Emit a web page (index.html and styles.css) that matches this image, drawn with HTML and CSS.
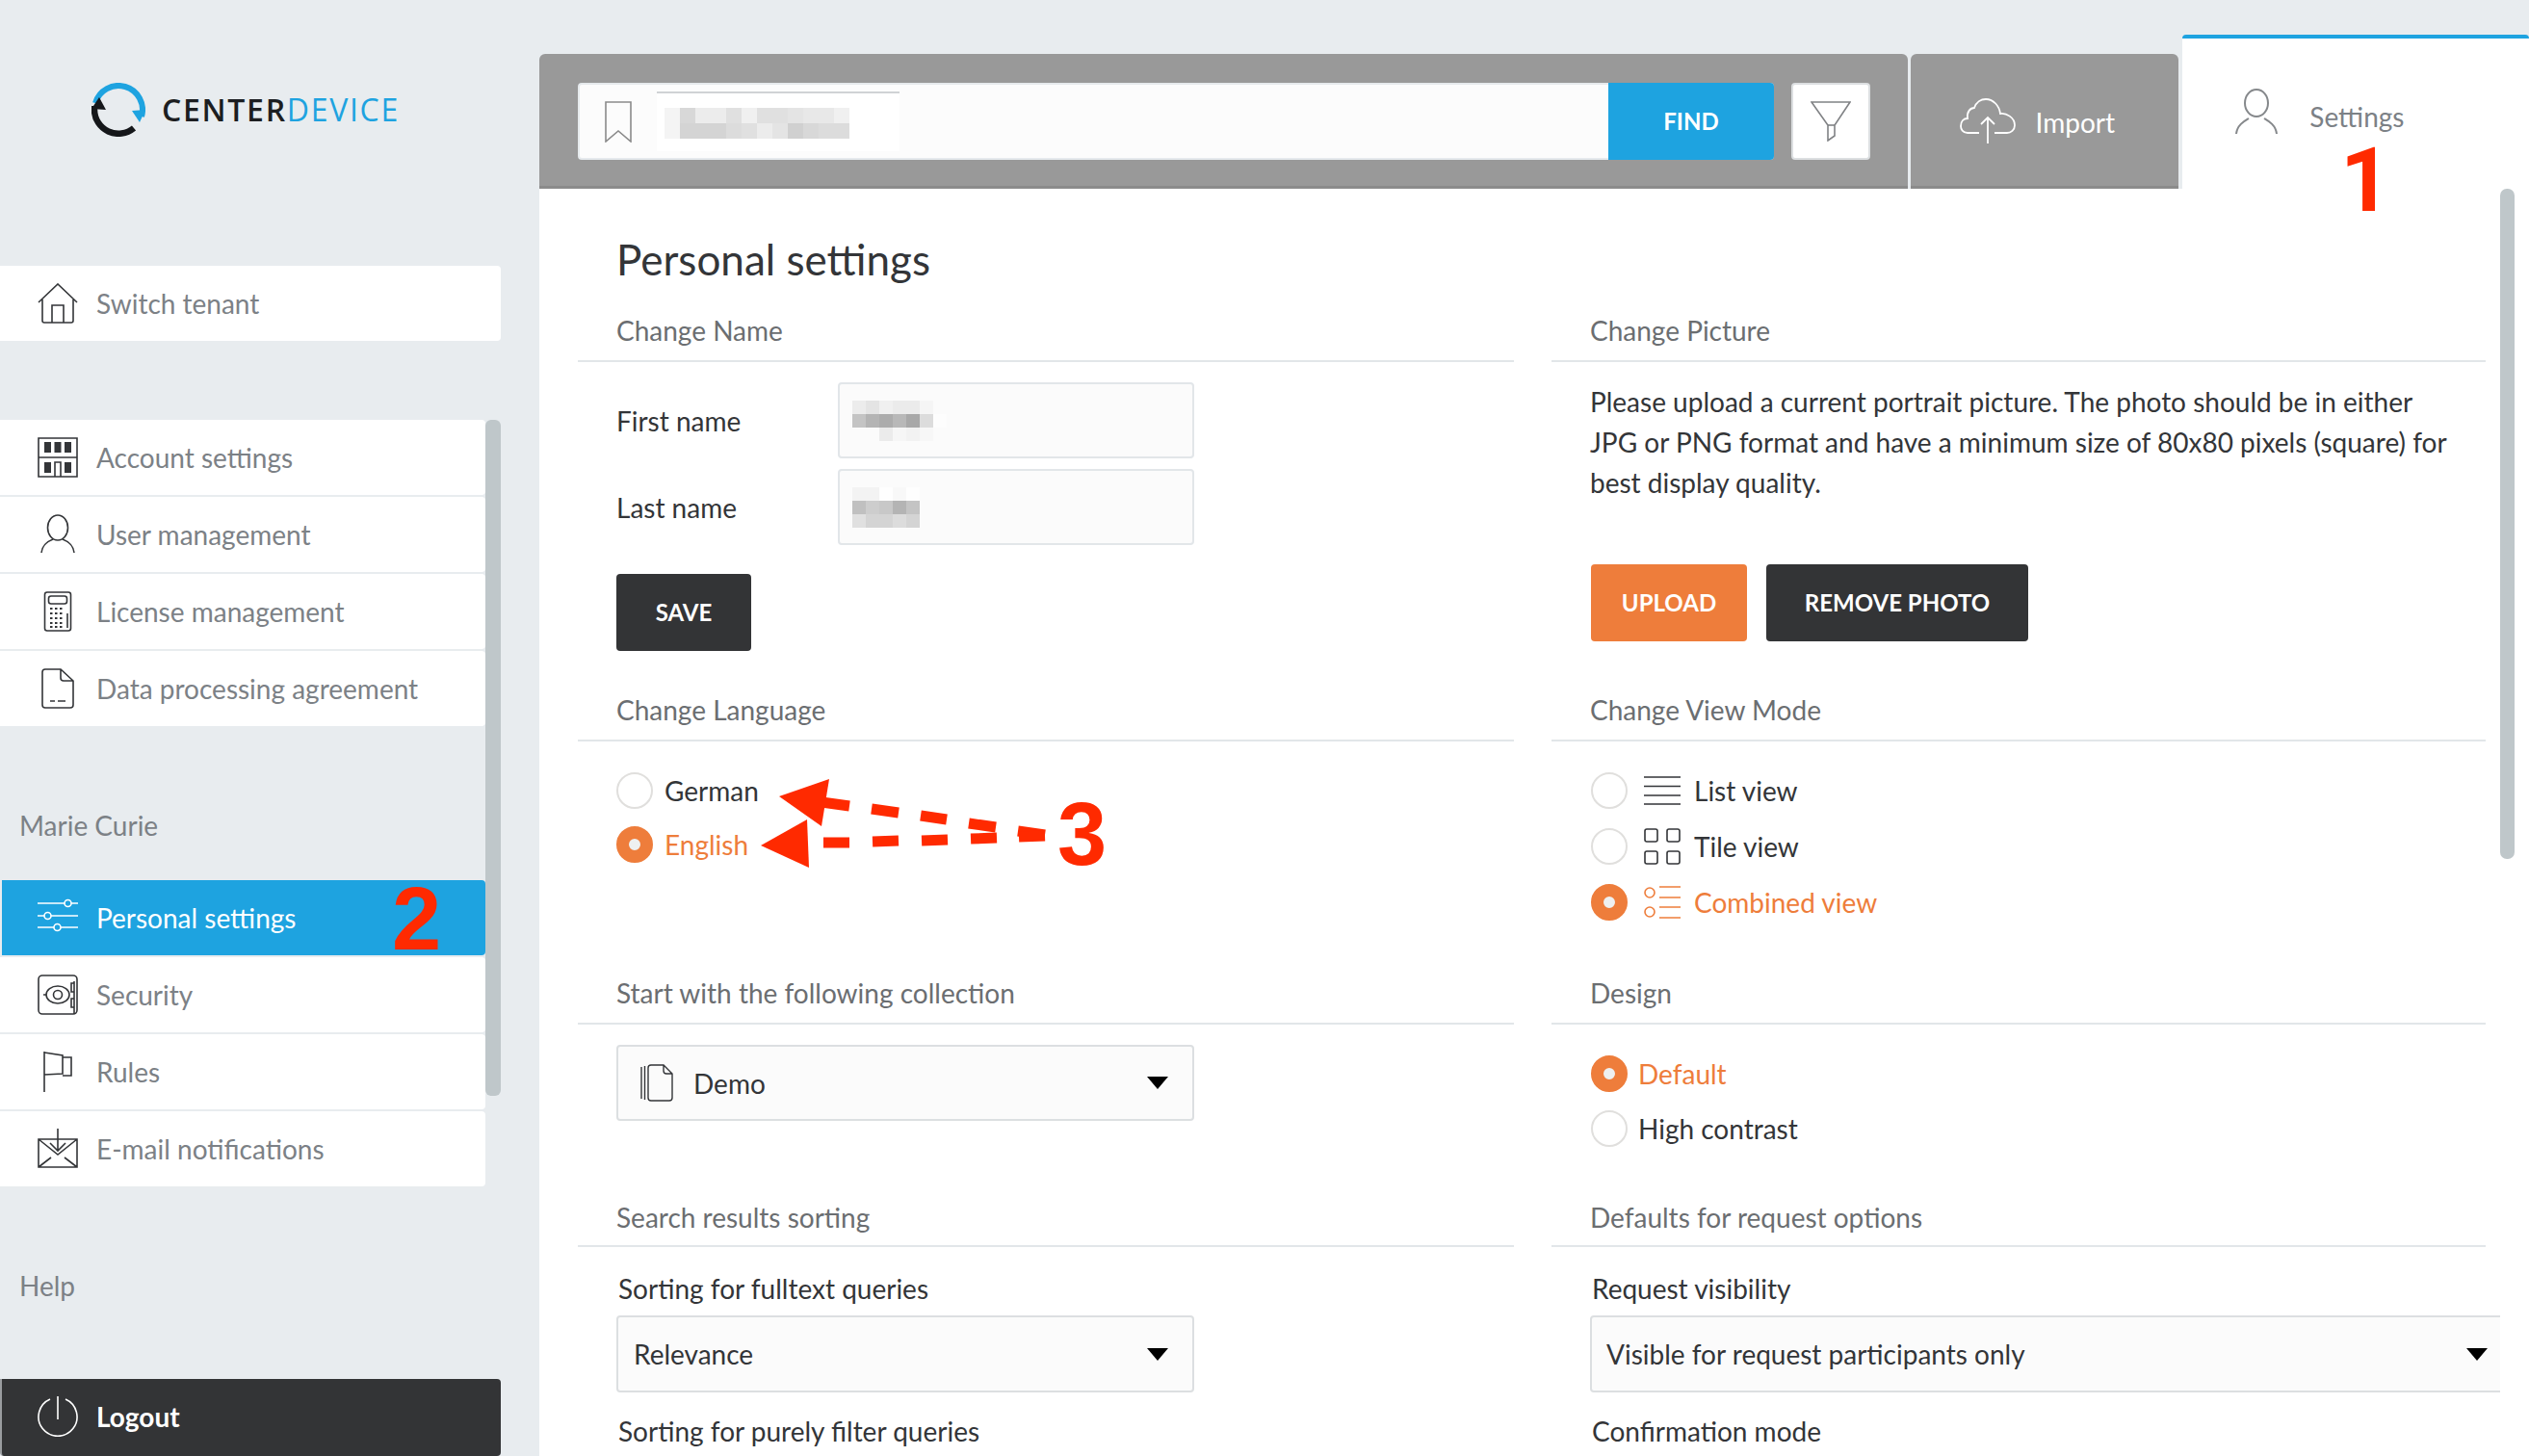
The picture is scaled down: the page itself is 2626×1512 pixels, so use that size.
FILE: index.html
```html
<!DOCTYPE html>
<html lang="en">
<head>
<meta charset="utf-8">
<title>CenterDevice - Personal settings</title>
<link rel="stylesheet" href="styles.css">
</head>
<body>
<div class="app">
  <aside class="sidebar">
    <div class="logo">
      <svg class="logo-mark" viewBox="0 0 56 56" width="56" height="56">
        <path d="M4 21A25 25 0 0 1 52 35" fill="none" stroke="#1ea3e0" stroke-width="6"/>
        <path d="M42 29L50 41L56 28Z" fill="#1ea3e0"/>
        <path d="M44 47A25 25 0 0 1 3 28V24" fill="none" stroke="#15171a" stroke-width="6.500"/>
        <path d="M0 27L8 15L15 28Z" fill="#15171a"/>
      </svg>
      <span class="logo-text">CENTER<span class="logo-blue">DEVICE</span></span>
    </div>
    <a class="nav-row solo">
      <svg class="ico" viewBox="0 0 42 42"><path d="M1 20L21 1L41 20M5 17V39a2 2 0 0 0 2 2H35a2 2 0 0 0 2-2V17M15 41V23H27V41"/></svg>
      <span>Switch tenant</span>
    </a>
    <div class="nav-scroll">
      <div class="nav-thumb"></div>
      <div class="nav-group">
        <a class="nav-row">
          <svg class="ico" viewBox="0 0 42 42"><path d="M1 1H41V41H1ZM1 21H41"/><path class="fill" d="M7 5H14V16H7ZM17.500 5H24.500V16H17.500ZM28 5H35V16H28ZM7 26H14V37H7ZM28 26H35V37H28Z"/><path d="M18 41V26H24V41"/></svg>
          <span>Account settings</span>
        </a>
        <a class="nav-row">
          <svg class="ico" viewBox="0 0 42 42"><ellipse cx="21" cy="14" rx="10.500" ry="13"/><path d="M4 40C5 31 11 28 16 26M38 40C37 31 31 28 26 26"/></svg>
          <span>User management</span>
        </a>
        <a class="nav-row">
          <svg class="ico" viewBox="0 0 42 42"><rect x="7.500" y="1" width="27" height="40" rx="2.500"/><rect x="11.500" y="5" width="19" height="8" rx="2.500"/><path class="dots" d="M13 18H28M13 23H28M13 28H28M13 33H28M13 37H28"/><path d="M31 23V38"/></svg>
          <span>License management</span>
        </a>
        <a class="nav-row">
          <svg class="ico" viewBox="0 0 42 42"><path d="M24 1H8a3 3 0 0 0-3 3V38a3 3 0 0 0 3 3H34a3 3 0 0 0 3-3V13ZM24 1V10a3 3 0 0 0 3 3H37M13 34H18M21 34H29"/></svg>
          <span>Data processing agreement</span>
        </a>
      </div>
      <div class="nav-label user">Marie Curie</div>
      <div class="nav-group">
        <a class="nav-row active">
          <svg class="ico light" viewBox="0 0 42 42"><path d="M0 6H28M35 6H42M0 19H7M14 19H42M0 31H17M24 31H42"/><circle cx="31.500" cy="6" r="3.500"/><circle cx="10.500" cy="19" r="3.500"/><circle cx="20.500" cy="31" r="3.500"/></svg>
          <span>Personal settings</span>
        </a>
        <a class="nav-row">
          <svg class="ico" viewBox="0 0 42 42"><rect x="1" y="1" width="40" height="40" rx="4"/><ellipse cx="21" cy="21" rx="12" ry="9"/><circle cx="21" cy="21" r="4.500"/><path d="M6 21H9M38 7V41M38 9H35V18H38M38 25H35V34H38"/></svg>
          <span>Security</span>
        </a>
        <a class="nav-row">
          <svg class="ico" viewBox="0 0 42 42"><path d="M7 0V42M7 1L26 4V23L7 24M26 6H35V25H26"/></svg>
          <span>Rules</span>
        </a>
        <a class="nav-row">
          <svg class="ico" viewBox="0 0 42 42"><path d="M1 11H13M29 11H41V40H1V11ZM1 11L21 27L41 11M1 40L14 30M41 40L28 30M21 0V23M13 15L21 23L29 15"/></svg>
          <span>E-mail notifications</span>
        </a>
      </div>
      <div class="nav-label help">Help</div>
    </div>
    <a class="logout">
      <svg class="ico light" viewBox="0 0 42 42"><path d="M13 3A20 20 0 1 0 29 3M21 0V24"/></svg>
      <span>Logout</span>
    </a>
  </aside>

  <div class="main">
    <header class="topbar">
      <div class="search-panel">
        <div class="search-box">
          <svg class="bookmark" viewBox="0 0 28 43" width="28" height="43"><path d="M1 1H27V42L14 31L1 42Z"/></svg>
          <div class="blur-field">
            <svg viewBox="0 0 192 32" width="192" height="32">
              <g>
                <rect x="0" width="16" height="16" fill="#f4f4f4"/><rect x="16" width="16" height="16" fill="#d8d8d8"/><rect x="32" width="16" height="16" fill="#ececec"/><rect x="48" width="16" height="16" fill="#ececec"/><rect x="64" width="16" height="16" fill="#e0e0e0"/><rect x="80" width="16" height="16" fill="#f0f0f0"/><rect x="96" width="16" height="16" fill="#e0e0e0"/><rect x="112" width="16" height="16" fill="#e0e0e0"/><rect x="128" width="16" height="16" fill="#e4e4e4"/><rect x="144" width="16" height="16" fill="#e8e8e8"/><rect x="160" width="16" height="16" fill="#e8e8e8"/><rect x="176" width="16" height="16" fill="#f0f0f0"/>
                <rect x="0" y="16" width="16" height="16" fill="#f4f4f4"/><rect x="16" y="16" width="16" height="16" fill="#d4d4d4"/><rect x="32" y="16" width="16" height="16" fill="#d4d4d4"/><rect x="48" y="16" width="16" height="16" fill="#d4d4d4"/><rect x="64" y="16" width="16" height="16" fill="#dcdcdc"/><rect x="80" y="16" width="16" height="16" fill="#e0e0e0"/><rect x="96" y="16" width="16" height="16" fill="#ececec"/><rect x="112" y="16" width="16" height="16" fill="#e4e4e4"/><rect x="128" y="16" width="16" height="16" fill="#d0d0d0"/><rect x="144" y="16" width="16" height="16" fill="#d8d8d8"/><rect x="160" y="16" width="16" height="16" fill="#dcdcdc"/><rect x="176" y="16" width="16" height="16" fill="#dcdcdc"/>
              </g>
            </svg>
          </div>
          <button class="btn-find">FIND</button>
        </div>
        <button class="btn-filter">
          <svg viewBox="0 0 42 42" width="42" height="42"><path d="M1 1H41L25 25V36L18 41V25Z"/><path d="M18 25H25"/></svg>
        </button>
      </div>
      <div class="import-tab">
        <svg class="cloud" viewBox="0 0 58 48" width="58" height="48"><path d="M20 36H8C3 36 1 32 1 29C1 24 4 21 8 21C7 14 11 10 15 10C17 4 22 1 27 1C35 1 41 8 42 16C48 15 57 20 57 28C57 33 53 36 49 36H36M29 47V20M22 27L29 20L36 27"/></svg>
        <span>Import</span>
      </div>
      <div class="settings-tab">
        <svg class="tab-user" viewBox="0 0 44 48" width="44" height="48"><ellipse cx="22" cy="15" rx="12" ry="14"/><path d="M1 47C2 38 9 34 14 31M43 47C42 38 35 34 30 31"/></svg>
        <span>Settings</span>
      </div>
    </header>

    <div class="body-area">
      <div class="content">
        <h1 class="page-title">Personal settings</h1>
        <div class="form-grid">
          <section>
            <h2 class="sec-title">Change Name</h2>
            <div class="name-row">
              <label class="field-label">First name</label>
              <div class="input">
                <svg viewBox="0 0 98 42" width="98" height="42">
                  <rect x="0" width="14" height="14" fill="#ececec"/><rect x="14" width="14" height="14" fill="#e4e4e4"/><rect x="28" width="14" height="14" fill="#f0f0f0"/><rect x="42" width="14" height="14" fill="#ebebeb"/><rect x="56" width="14" height="14" fill="#ebebeb"/><rect x="70" width="14" height="14" fill="#f5f5f5"/>
                  <rect x="0" y="14" width="14" height="14" fill="#c4c4c4"/><rect x="14" y="14" width="14" height="14" fill="#b4b4b4"/><rect x="28" y="14" width="14" height="14" fill="#acacac"/><rect x="42" y="14" width="14" height="14" fill="#b8b8b8"/><rect x="56" y="14" width="14" height="14" fill="#a8a8a8"/><rect x="70" y="14" width="14" height="14" fill="#dcdcdc"/><rect x="84" y="14" width="14" height="14" fill="#fdfdfd"/>
                  <rect x="28" y="28" width="14" height="14" fill="#ebebeb"/><rect x="42" y="28" width="14" height="14" fill="#f6f6f6"/><rect x="56" y="28" width="14" height="14" fill="#f2f2f2"/><rect x="70" y="28" width="14" height="14" fill="#f7f7f7"/>
                </svg>
              </div>
            </div>
            <div class="name-row second">
              <label class="field-label">Last name</label>
              <div class="input">
                <svg viewBox="0 0 84 42" width="84" height="42">
                  <rect x="0" width="14" height="14" fill="#f3f3f3"/><rect x="14" width="14" height="14" fill="#f3f3f3"/><rect x="28" width="14" height="14" fill="#fefefe"/><rect x="42" width="14" height="14" fill="#f8f8f8"/><rect x="56" width="14" height="14" fill="#fefefe"/>
                  <rect x="0" y="14" width="14" height="14" fill="#c0c0c0"/><rect x="14" y="14" width="14" height="14" fill="#cdcdcd"/><rect x="28" y="14" width="14" height="14" fill="#c8c8c8"/><rect x="42" y="14" width="14" height="14" fill="#b4b4b4"/><rect x="56" y="14" width="14" height="14" fill="#c4c4c4"/>
                  <rect x="0" y="28" width="14" height="14" fill="#e0e0e0"/><rect x="14" y="28" width="14" height="14" fill="#d4d4d4"/><rect x="28" y="28" width="14" height="14" fill="#d4d4d4"/><rect x="42" y="28" width="14" height="14" fill="#dcdcdc"/><rect x="56" y="28" width="14" height="14" fill="#d4d4d4"/>
                </svg>
              </div>
            </div>
            <button class="btn btn-dark btn-save">SAVE</button>
          </section>
          <section>
            <h2 class="sec-title">Change Picture</h2>
            <p class="picture-text">Please upload a current portrait picture. The photo should be in either JPG or PNG format and have a minimum size of 80x80 pixels (square) for best display quality.</p>
            <div class="picture-actions">
              <button class="btn btn-orange btn-upload">UPLOAD</button>
              <button class="btn btn-dark btn-remove">REMOVE PHOTO</button>
            </div>
          </section>

          <section>
            <h2 class="sec-title">Change Language</h2>
            <div class="radios lang">
              <div class="radio-row"><i class="radio"></i><span>German</span></div>
              <div class="radio-row on"><i class="radio"></i><span>English</span></div>
            </div>
          </section>
          <section>
            <h2 class="sec-title">Change View Mode</h2>
            <div class="radios view">
              <div class="radio-row"><i class="radio"></i>
                <svg class="mode" viewBox="0 0 38 30"><path d="M0 1H38M0 10.500H38M0 20H38M0 29H38"/></svg>
                <span>List view</span></div>
              <div class="radio-row"><i class="radio"></i>
                <svg class="mode" viewBox="0 0 38 38"><rect x="1" y="1" width="13" height="13" rx="2"/><rect x="24" y="1" width="13" height="13" rx="2"/><rect x="1" y="24" width="13" height="13" rx="2"/><rect x="24" y="24" width="13" height="13" rx="2"/></svg>
                <span>Tile view</span></div>
              <div class="radio-row on"><i class="radio"></i>
                <svg class="mode" viewBox="0 0 38 34"><circle cx="6" cy="7" r="5"/><circle cx="6" cy="27" r="5"/><path d="M16 1H38M16 12H38M16 22H38M16 33H38"/></svg>
                <span>Combined view</span></div>
            </div>
          </section>

          <section>
            <h2 class="sec-title">Start with the following collection</h2>
            <div class="select first">
              <svg class="stack" viewBox="0 0 34 39" width="34" height="39"><path d="M1 3V36M4.500 2V37M24 1H11a3 3 0 0 0-3 3V35a3 3 0 0 0 3 3H30a3 3 0 0 0 3-3V10ZM24 1V7a3 3 0 0 0 3 3H33"/></svg>
              <span class="select-value">Demo</span>
              <i class="caret"></i>
            </div>
          </section>
          <section>
            <h2 class="sec-title">Design</h2>
            <div class="radios design">
              <div class="radio-row on"><i class="radio"></i><span>Default</span></div>
              <div class="radio-row"><i class="radio"></i><span>High contrast</span></div>
            </div>
          </section>

          <section>
            <h2 class="sec-title low">Search results sorting</h2>
            <div class="field-head">Sorting for fulltext queries</div>
            <div class="select plain"><span class="select-value">Relevance</span><i class="caret"></i></div>
            <div class="field-head last">Sorting for purely filter queries</div>
          </section>
          <section>
            <h2 class="sec-title low">Defaults for request options</h2>
            <div class="field-head">Request visibility</div>
            <div class="select plain wide"><span class="select-value">Visible for request participants only</span><i class="caret"></i></div>
            <div class="field-head last">Confirmation mode</div>
          </section>
        </div>
      </div>
      <div class="gutter"><div class="gutter-thumb"></div></div>
    </div>
  </div>

  <svg class="annot-arrows" viewBox="0 0 400 110" width="400" height="110">
    <g transform="translate(-780 -800)">
      <path class="head" d="M809 827L861 809L853 858Z"/>
      <path class="head" d="M790 878L838 851L840 901Z"/>
      <path class="dash" d="M853 833L882 837M905 840L933 844M956 847L983 851M1006 855L1034 859M1057 863L1085 867"/>
      <path class="dash" d="M855 875H882M906 874L933 873M957 873L984 872M1008 871L1035 870M1058 869L1085 868"/>
    </g>
  </svg>
  <span class="annot n1">1</span>
  <span class="annot n2">2</span>
  <span class="annot n3">3</span>
</div>
</body>
</html>
```

FILE: styles.css
```css
* { box-sizing: border-box; }
html, body { margin: 0; padding: 0; }
body {
  width: 2626px;
  height: 1512px;
  overflow: hidden;
  background: #e8ecef;
  font-family: Lato, "Open Sans", sans-serif;
  font-size: 28px;
  color: #333538;
}
button { font-family: inherit; border: 0; cursor: pointer; }
.app { position: relative; display: flex; width: 2626px; height: 1512px; overflow: hidden; }

/* sidebar */
.sidebar { width: 560px; height: 1512px; display: flex; flex-direction: column; flex: none; }
.logo { height: 276px; padding: 86px 0 0 95px; display: flex; align-items: flex-start; }
.logo-mark { flex: none; }
.logo-text { margin: 6px 0 0 17px; font-family: "Open Sans", sans-serif; font-size: 32px; font-weight: 600; line-height: 44px; color: #1c1e21; letter-spacing: 1.7px; }
.logo-blue { color: #1ea3e0; font-weight: 500; }

.nav-row { height: 78px; background: #fff; display: flex; align-items: center; color: #7c8186; border-radius: 0 4px 4px 0; }
.nav-row.solo { width: 520px; }
.ico { width: 42px; height: 42px; margin: 0 19px 0 39px; flex: none; fill: none; stroke: #333538; stroke-width: 1.6; }
.ico .fill { fill: #333538; stroke: none; }
.ico .dots { stroke-dasharray: 2.500 2.500; stroke-width: 2; }
.ico.light { stroke: #fff; }
.nav-scroll { position: relative; margin-top: 82px; width: 520px; }
.nav-thumb { position: absolute; left: 504px; top: 0; width: 16px; height: 702px; background: #bfc7ca; border-radius: 6px; }
.nav-group { width: 504px; display: flex; flex-direction: column; gap: 2px; }
.nav-row.active { background: #1ea3e0; color: #fff; border-left: 2px solid #e8ecef; }
.nav-row.active .ico { margin-left: 37px; }
.nav-label { color: #7c8186; padding-left: 20px; }
.nav-label.user { height: 160px; padding-top: 85px; line-height: 36px; }
.nav-label.help { height: 150px; padding-top: 85px; line-height: 36px; }
.logout { margin-top: auto; width: 520px; height: 80px; padding-bottom: 2px; background: #333436; color: #fff; font-weight: 700; display: flex; align-items: center; border-left: 2px solid #9a9da0; border-radius: 0 4px 4px 4px; }
.logout .ico { margin-left: 37px; }

/* top bar */
.main { width: 2066px; height: 1512px; display: flex; flex-direction: column; flex: none; }
.topbar { height: 196px; display: flex; align-items: flex-end; flex: none; }
.search-panel { width: 1422px; height: 140px; background: #999; border-bottom: 3px solid #8b8b8b; border-radius: 6px 6px 0 0; display: flex; align-items: flex-start; padding: 30px 0 0 40px; }
.search-box { width: 1242px; height: 80px; background: #fcfcfc; border: 2px solid #e6eaed; border-radius: 4px; display: flex; align-items: center; position: relative; }
.bookmark { margin-left: 26px; flex: none; fill: none; stroke: #8a8a8a; stroke-width: 1.6; }
.blur-field { width: 252px; height: 62px; margin-left: 26px; background: #fff; border-top: 2px solid #d0d3d5; padding: 15px 0 0 8px; }
.blur-field svg { display: block; }
.btn-find { margin-left: auto; margin-right: -2px; width: 172px; height: 80px; padding: 0 0 2px; background: #1ea3e0; color: #fff; font-weight: 700; font-size: 24px; border-radius: 0 4px 4px 0; }
.btn-filter { margin-left: 18px; width: 82px; height: 80px; background: #fff; border: 2px solid #dcdfe1; border-radius: 4px; padding: 0; display: flex; align-items: center; justify-content: center; }
.btn-filter svg { fill: none; stroke: #808285; stroke-width: 1.6; }
.import-tab { margin-left: 3px; width: 279px; height: 140px; background: #999; border-bottom: 3px solid #8b8b8b; border-radius: 6px 6px 0 0; color: #fff; display: flex; align-items: center; padding: 5px 0 0 51px; }
.cloud { fill: none; stroke: #fff; stroke-width: 1.8; flex: none; margin: -3px 21px 0 0; }
.settings-tab { margin-left: 4px; width: 360px; height: 160px; background: #fff; border-top: 4px solid #1ea3e0; border-radius: 4px 4px 0 0; color: #7c8186; display: flex; align-items: flex-start; padding: 52px 0 0 55px; }
.tab-user { fill: none; stroke: #85888b; stroke-width: 2; flex: none; margin-right: 33px; }
.settings-tab span { line-height: 40px; margin-top: 9px; }

/* content */
.body-area { flex: 1; display: flex; background: #fff; min-height: 0; }
.content { width: 2036px; overflow: hidden; padding-left: 40px; flex: none; }
.page-title { margin: 0; height: 120px; padding: 47px 0 0 40px; font-size: 44px; line-height: 52px; font-weight: 400; color: #333538; }
.form-grid { display: grid; grid-template-columns: 972px 970px; column-gap: 39px; grid-template-rows: 394px 294px 231px auto; }
.sec-title { margin: 0; height: 60px; padding: 9px 0 0 40px; line-height: 36px; font-size: 28px; font-weight: 400; color: #6b6e71; border-bottom: 2px solid #e2e6e9; }
.sec-title.low { padding-top: 11px; }

.name-row { display: flex; align-items: center; margin-top: 21px; padding-left: 40px; }
.name-row.second { margin-top: 11px; }
.field-label { width: 230px; flex: none; }
.input { width: 370px; height: 79px; background: #fbfbfb; border: 2px solid #e2e6e9; border-radius: 4px; display: flex; align-items: center; padding-left: 13px; }
.btn { display: block; height: 80px; color: #fff; font-weight: 700; font-size: 24px; border-radius: 4px; padding: 0 0 2px; }
.btn-dark { background: #333436; }
.btn-orange { background: #ee7d3b; }
.btn-save { width: 140px; margin: 30px 0 0 40px; }
.picture-text { margin: 20px 0 0 40px; width: 900px; line-height: 42px; color: #333538; }
.picture-actions { display: flex; gap: 20px; margin: 64px 0 0 41px; }
.btn-upload { width: 162px; }
.btn-remove { width: 272px; }

.radios { display: flex; flex-direction: column; padding: 32px 0 0 40px; }
.radios.lang { gap: 18px; }
.radios.view { gap: 20px; padding-left: 41px; }
.radios.design { gap: 19px; padding-left: 41px; }
.radio-row { display: flex; align-items: center; height: 38px; }
.radio { width: 38px; height: 38px; border-radius: 50%; background: #fff; border: 2px solid #e0dfdd; margin-right: 12px; flex: none; }
.radios.view .radio, .radios.design .radio { margin-right: 11px; }
.radio-row.on { color: #ee7d3b; }
.radio-row.on .radio { border: 13px solid #ee7d3b; background: #eef0f0; }
.mode { width: 38px; flex: none; margin: 0 14px 0 6px; fill: none; stroke: #333538; stroke-width: 1.6; }
.radio-row.on .mode { stroke: #ee7d3b; }

.select { width: 600px; height: 79px; margin-left: 40px; background: #fbfbfb; border: 2px solid #dcdfe1; border-radius: 4px; display: flex; align-items: center; }
.select.first { margin-top: 21px; }
.select.plain { height: 80px; padding-left: 16px; }
.select.wide { width: 959px; padding-left: 15px; margin-left: 40px; }
.select-value { color: #333538; }
.stack { margin: 0 21px 0 23px; fill: none; stroke: #333538; stroke-width: 1.4; flex: none; }
.caret { margin-left: auto; margin-right: 25px; width: 0; height: 0; border-left: 11px solid transparent; border-right: 11px solid transparent; border-top: 13px solid #000; }
.field-head { padding: 26px 0 11px 42px; line-height: 34px; color: #333538; }
.field-head.last { padding-top: 23px; }

/* scrollbar */
.gutter { width: 30px; flex: none; }
.gutter-thumb { width: 15px; height: 696px; background: #bfc7ca; border-radius: 7px; }

/* red annotations over the screenshot */
.annot { position: absolute; font-family: "Liberation Sans", Arial, sans-serif; font-weight: 700; font-size: 92px; line-height: 92px; color: #ff2a00; }
.n1 { left: 2430px; top: 142px; font-family: Roboto, "Liberation Sans", sans-serif; }
.n2 { left: 407px; top: 908px; }
.n3 { left: 1098px; top: 820px; }
.annot-arrows { position: absolute; left: 780px; top: 800px; }
.annot-arrows .head { fill: #ff2a00; }
.annot-arrows .dash { fill: none; stroke: #ff2a00; stroke-width: 11; }
```
